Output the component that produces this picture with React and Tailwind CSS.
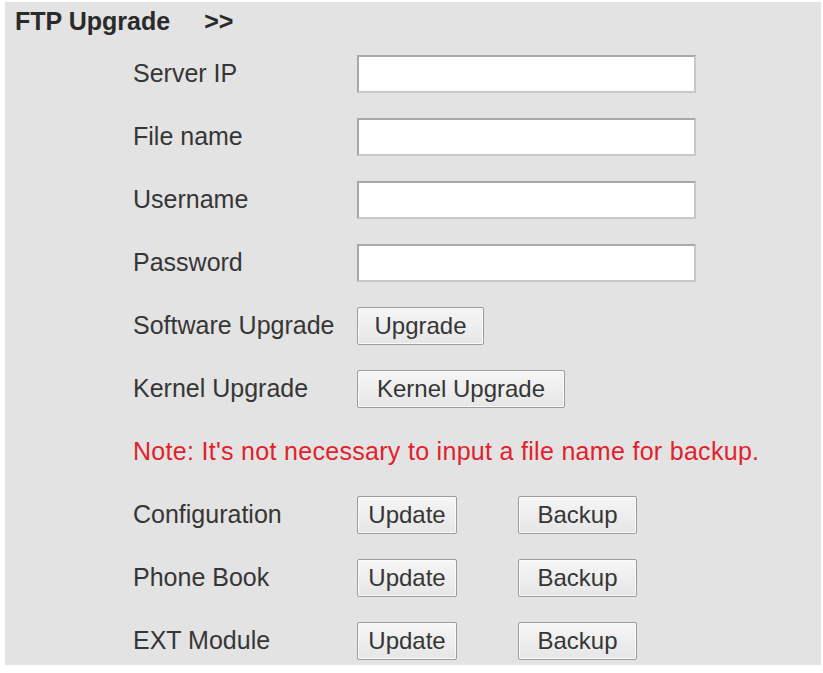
export default function App() {
  const font = { fontFamily: '"Liberation Sans", Arial, sans-serif' };

  const Field = ({ label }) => (
    <div className="flex h-[63px] items-center">
      <span className="w-[224px] text-[25px] text-[#363636]">{label}</span>
      <input type="text" className="h-[38px] w-[339px] border-2 border-[#a8a8a8] border-r-[#c8c8c8] border-b-[#c8c8c8] bg-white outline-none" />
    </div>
  );

  const Btn = ({ children, w }) => (
    <button className={`h-[38px] ${w} rounded-[2px] border border-[#9c9c9c] bg-gradient-to-b from-[#f6f6f6] to-[#e6e6e6] text-[24px] text-[#363636] shadow-[inset_0_0_0_1px_#fafafa]`}>
      {children}
    </button>
  );

  return (
    <div className="min-h-screen bg-white pl-[5px] pt-[2px] pr-[2px]" style={font}>
      <div className="h-[663px] bg-[#e3e3e3]">
        <div className="flex h-[40px] items-center pl-[10px] text-[25px] font-bold text-[#2a2a2a]">
          <span>FTP Upgrade</span>
          <span className="ml-[34px]">&gt;&gt;</span>
        </div>

        <div className="pl-[128px]">
          <Field label="Server IP" />
          <Field label="File name" />
          <Field label="Username" />
          <Field label="Password" />

          <div className="flex h-[63px] items-center">
            <span className="w-[224px] text-[25px] text-[#363636]">Software Upgrade</span>
            <Btn w="w-[127px]">Upgrade</Btn>
          </div>
          <div className="flex h-[63px] items-center">
            <span className="w-[224px] text-[25px] text-[#363636]">Kernel Upgrade</span>
            <Btn w="w-[208px]">Kernel Upgrade</Btn>
          </div>

          <div className="flex h-[63px] items-center text-[25px] tracking-[0.3px] text-[#e0222c]">
            Note: It's not necessary to input a file name for backup.
          </div>

          {["Configuration", "Phone Book", "EXT Module"].map((l) => (
            <div key={l} className="flex h-[63px] items-center">
              <span className="w-[224px] text-[25px] text-[#363636]">{l}</span>
              <Btn w="w-[100px]">Update</Btn>
              <div className="w-[61px]" />
              <Btn w="w-[119px]">Backup</Btn>
            </div>
          ))}
        </div>
      </div>
    </div>
  );
}
